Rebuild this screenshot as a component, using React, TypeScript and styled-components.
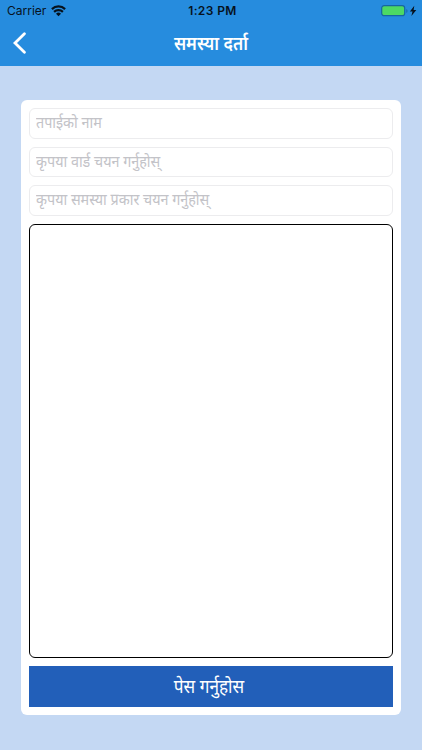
import React from "react";
import styled, { createGlobalStyle } from "styled-components";

const GlobalStyle = createGlobalStyle`
  * { box-sizing: border-box; }
  body { margin: 0; font-family: "Noto Sans Devanagari", "Noto Sans", sans-serif; }
`;

const Screen = styled.div`
  width: 422px;
  height: 750px;
  display: flex;
  flex-direction: column;
  background: #c4d8f3;
  overflow: hidden;
`;

const Header = styled.header`
  height: 66px;
  flex: none;
  background: #268cde;
`;

const StatusBar = styled.div`
  height: 22px;
  display: grid;
  grid-template-columns: 1fr auto 1fr;
  align-items: center;
  padding: 0 5px 0 7px;
  font-family: Inter, sans-serif;
  font-size: 12px;
  line-height: 22px;
  color: #06121d;
`;

const StatusGroup = styled.div<{ $end?: boolean }>`
  display: flex;
  align-items: center;
  gap: 5px;
  justify-content: ${(p) => (p.$end ? "flex-end" : "flex-start")};
`;

const Clock = styled.span`
  font-weight: 600;
  letter-spacing: 0.4px;
  padding-left: 1px;
`;

const NavBar = styled.div`
  height: 44px;
  display: grid;
  grid-template-columns: 40px 1fr 40px;
  align-items: center;
`;

const BackButton = styled.button`
  border: 0;
  background: none;
  padding: 0 0 2px 12px;
  height: 44px;
  display: flex;
  align-items: center;
`;

const Label = styled.span`
  display: inline-block;
  transform: scaleY(1.14);
`;

const Title = styled.h1`
  margin: 0;
  text-align: center;
  color: #fff;
  font-size: 17.1px;
  font-weight: 600;
  line-height: 46px;
  height: 44px;
`;

const Card = styled.form`
  margin: 34px 21px 35px 21px;
  flex: 1;
  display: flex;
  flex-direction: column;
  gap: 8px;
  padding: 8px;
  border-radius: 6px;
  background: #fff;
`;

const Field = styled.div`
  height: 30.6px;
  flex: none;
  border: 1px solid #ececee;
  border-radius: 6px;
  padding: 0 6px;
  font-size: 14.35px;
  line-height: 31px;
  color: #c3c3c8;
`;

const Description = styled.div`
  flex: 1;
  border: 1px solid #000;
  border-radius: 6px;
`;

const Submit = styled.button`
  height: 41px;
  flex: none;
  border: 0;
  padding: 3px 4px 0 0;
  background: #225fb9;
  color: #fff;
  font-family: inherit;
  font-size: 17.2px;
  line-height: 41px;
`;

export default function App() {
  return (
    <Screen>
      <GlobalStyle />
      <Header>
        <StatusBar>
          <StatusGroup>
            <span>Carrier</span>
            <svg width="15" height="12" viewBox="0 0 15 12" fill="none" stroke="#06121d" strokeWidth="2.2">
              <path d="M.9 4.1a9.5 9.5 0 0 1 13.2 0M3.1 6.9a6.3 6.3 0 0 1 8.8 0" />
              <path d="M5 8.8a3.6 3.6 0 0 1 5 0L7.5 11.2z" fill="#06121d" stroke="none" />
            </svg>
          </StatusGroup>
          <Clock>1:23 PM</Clock>
          <StatusGroup $end>
            <svg width="36" height="12" viewBox="0 0 36 12">
              <rect x=".7" y=".7" width="23" height="10" rx="2.5" fill="#4cd964" stroke="#1766a1" strokeWidth="1.2" />
              <path d="M25.3 4v4c1.7-.7 1.7-3.3 0-4z" fill="#176ba9" />
              <path d="M33.3.8l-4.4 5.6h2.6L30.4 11l4.9-6h-2.7z" fill="#06121d" />
            </svg>
          </StatusGroup>
        </StatusBar>
        <NavBar>
          <BackButton aria-label="Back">
            <svg width="14" height="22" viewBox="0 0 14 22" fill="none" stroke="#fff" strokeWidth="2.8" strokeLinecap="round">
              <path d="M12.4 1.8L3 11l9.4 9.2" />
            </svg>
          </BackButton>
          <Title><Label>समस्या दर्ता</Label></Title>
        </NavBar>
      </Header>
      <Card>
        <Field><Label>तपाईको नाम</Label></Field>
        <Field><Label>कृपया वार्ड चयन गर्नुहोस्</Label></Field>
        <Field><Label>कृपया समस्या प्रकार चयन गर्नुहोस्</Label></Field>
        <Description />
        <Submit type="button"><Label>पेस गर्नुहोस</Label></Submit>
      </Card>
    </Screen>
  );
}
